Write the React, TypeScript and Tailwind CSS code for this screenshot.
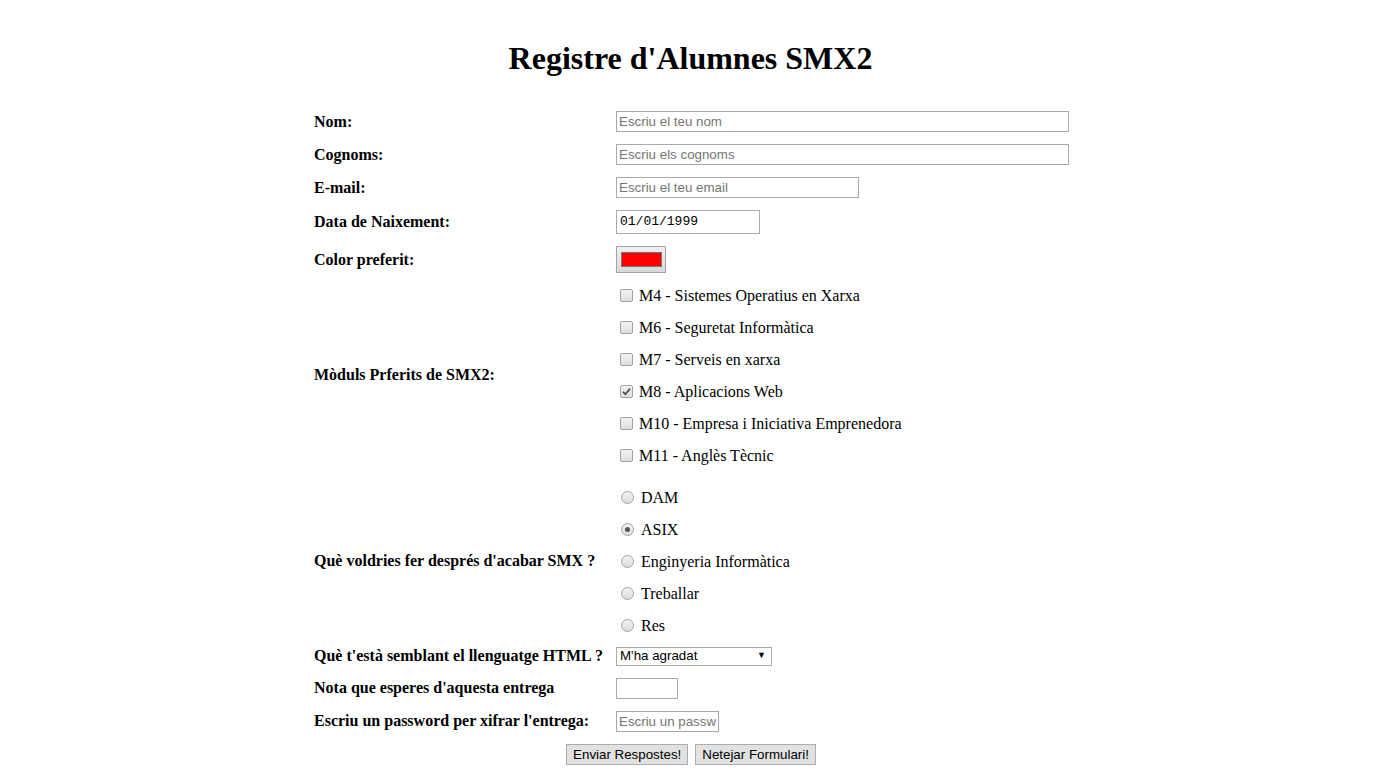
import React from "react";

const serif = "font-['Liberation_Serif','Times_New_Roman',serif]";
const sans = "font-['Liberation_Sans',Arial,sans-serif]";

function Label({ children }: { children: React.ReactNode }) {
  return <div className={`pl-[2px] font-bold text-[16px] ${serif} text-black`}>{children}</div>;
}

function Checkbox({ checked }: { checked?: boolean }) {
  return (
    <span className="ml-[4px] mr-[6px] w-[13px] h-[13px] rounded-[2px] border border-[#a3a3a3] bg-gradient-to-b from-[#f4f4f4] to-[#dedede] flex items-center justify-center shrink-0 -mt-[2px]">
      {checked && (
        <svg width="9" height="9" viewBox="0 0 9 9">
          <path d="M1 4.8 L3.4 7.2 L8 1.6" fill="none" stroke="#4a4a4a" strokeWidth="1.7" />
        </svg>
      )}
    </span>
  );
}

function Radio({ checked }: { checked?: boolean }) {
  return (
    <span className="ml-[5px] mr-[7px] w-[13px] h-[13px] rounded-full border border-[#a3a3a3] bg-gradient-to-b from-[#f4f4f4] to-[#dcdcdc] flex items-center justify-center shrink-0 -mt-[2px]">
      {checked && <span className="w-[5px] h-[5px] rounded-full bg-[#555]" />}
    </span>
  );
}

export default function App() {
  const moduls = [
    { text: "M4 - Sistemes Operatius en Xarxa" },
    { text: "M6 - Seguretat Informàtica" },
    { text: "M7 - Serveis en xarxa" },
    { text: "M8 - Aplicacions Web", checked: true },
    { text: "M10 - Empresa i Iniciativa Emprenedora" },
    { text: "M11 - Anglès Tècnic" },
  ];
  const futur = [
    { text: "DAM" },
    { text: "ASIX", checked: true },
    { text: "Enginyeria Informàtica" },
    { text: "Treballar" },
    { text: "Res" },
  ];
  const input =
    `h-[21px] border border-[#a9a9a9] bg-white px-[2px] text-[13.33px] ${sans} text-black placeholder:text-[#757575] outline-none`;

  return (
    <main className={`min-h-screen bg-white ${serif}`}>
      <div className="pt-[40px] pb-[28px] pl-[7px] flex justify-center">
        <h1 className={`text-[32px] leading-[37px] font-bold ${serif} text-black`}>Registre d'Alumnes SMX2</h1>
      </div>
      <div className="w-[750px] mx-auto grid grid-cols-[304px_1fr]">
        <div className="h-[33px] flex items-center"><Label>Nom:</Label></div>
        <div className="h-[33px] flex items-center">
          <input className={`${input} w-[453px]`} placeholder="Escriu el teu nom" />
        </div>
        <div className="h-[33px] flex items-center"><Label>Cognoms:</Label></div>
        <div className="h-[33px] flex items-center">
          <input className={`${input} w-[453px]`} placeholder="Escriu els cognoms" />
        </div>
        <div className="h-[33px] flex items-center"><Label>E-mail:</Label></div>
        <div className="h-[33px] flex items-center">
          <input className={`${input} w-[243px]`} placeholder="Escriu el teu email" />
        </div>
        <div className="h-[36px] flex items-center"><Label>Data de Naixement:</Label></div>
        <div className="h-[36px] flex items-center">
          <div className="h-[24px] w-[144px] border border-[#a9a9a9] flex items-center pl-[3px] text-[13px] font-['Liberation_Mono','DejaVu_Sans_Mono',monospace] text-black">
            01/01/1999
          </div>
        </div>
        <div className="h-[39px] flex items-center"><Label>Color preferit:</Label></div>
        <div className="h-[39px] flex items-center">
          <div className="w-[50px] h-[27px] border border-[#a5a5a5] bg-gradient-to-b from-[#f0f0f0] to-[#dadada] flex items-center justify-center">
            <div className="w-[41px] h-[15px] border border-[#777] bg-[#ff0000]" />
          </div>
        </div>

        <div className="h-[192px] flex items-center"><Label>Mòduls Prferits de SMX2:</Label></div>
        <div className="flex flex-col">
          {moduls.map((m) => (
            <div key={m.text} className="h-[32px] flex items-center pt-[2px] text-[16px] text-black">
              <Checkbox checked={m.checked} />
              <span>{m.text}</span>
            </div>
          ))}
        </div>

        <div className="h-[160px] mt-[10px] flex items-center"><Label>Què voldries fer després d'acabar SMX ?</Label></div>
        <div className="flex flex-col mt-[10px]">
          {futur.map((f) => (
            <div key={f.text} className="h-[32px] flex items-center pt-[2px] text-[16px] text-black">
              <Radio checked={f.checked} />
              <span>{f.text}</span>
            </div>
          ))}
        </div>

        <div className="h-[30px] flex items-center"><Label>Què t'està semblant el llenguatge HTML ?</Label></div>
        <div className="h-[30px] flex items-center">
          <div className={`w-[156px] h-[19px] border border-[#a9a9a9] bg-white flex items-center justify-between pl-[3px] pr-[5px] text-[13.33px] ${sans} text-black`}>
            <span>M'ha agradat</span>
            <span className="text-[9px]">▼</span>
          </div>
        </div>
        <div className="h-[34px] flex items-center"><Label>Nota que esperes d'aquesta entrega</Label></div>
        <div className="h-[34px] flex items-center">
          <input className={`${input} w-[62px]`} />
        </div>
        <div className="h-[32px] flex items-center"><Label>Escriu un password per xifrar l'entrega:</Label></div>
        <div className="h-[32px] flex items-center">
          <input type="password" className={`${input} w-[103px]`} placeholder="Escriu un password" />
        </div>
        <div className="col-span-2 h-[34px] flex items-center justify-center gap-[7px] pl-[1px]">
          <button className={`h-[21px] px-[6px] border border-[#adadad] bg-[#e1e1e1] text-[13.33px] ${sans} text-black`}>Enviar Respostes!</button>
          <button className={`h-[21px] px-[6px] border border-[#adadad] bg-[#e1e1e1] text-[13.33px] ${sans} text-black`}>Netejar Formulari!</button>
        </div>
      </div>
    </main>
  );
}
